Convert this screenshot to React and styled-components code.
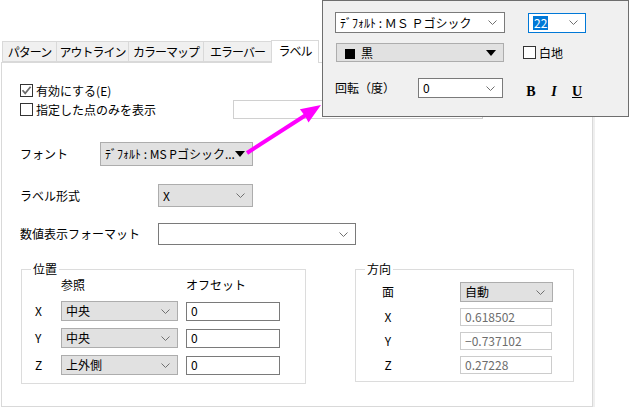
import React from 'react'
import styled, { createGlobalStyle } from 'styled-components'

const GlobalStyle = createGlobalStyle`
  html, body {
    margin: 0;
    padding: 0;
    background: #fff;
  }
  body {
    font-family: "Noto Sans CJK JP", "Liberation Sans", sans-serif;
    font-size: 12px;
    color: #000;
  }
  * { box-sizing: border-box; }
`

const Page = styled.div`
  position: relative;
  width: 630px;
  height: 409px;
  overflow: hidden;
  background: #fff;
`

const TabStrip = styled.div`
  display: flex;
  align-items: flex-end;
  height: 62px;
  padding-left: 2px;
  position: relative;
  z-index: 1;
`

const Tab = styled.div`
  width: ${p => p.w}px;
  height: ${p => (p.active ? 23 : 21)}px;
  margin-right: -1px;
  margin-bottom: ${p => (p.active ? -1 : 0)}px;
  border: 1px solid #d9d9d9;
  border-bottom: ${p => (p.active ? 'none' : '1px solid #d9d9d9')};
  background: ${p => (p.active ? '#fff' : '#f0f0f0')};
  display: flex;
  align-items: center;
  justify-content: center;
  line-height: 14px;
  white-space: nowrap;
  letter-spacing: -1px;
  position: relative;
  z-index: ${p => (p.active ? 2 : 1)};
  padding-bottom: ${p => (p.active ? 2 : 0)}px;
`

const Panel = styled.div`
  margin-left: 1px;
  width: 592px;
  height: 345px;
  border: 1px solid #d9d9d9;
  box-shadow: 2px 0 0 #efefef;
  padding: 18px 0 0 18px;
  background: #fff;
`

const Row = styled.div`
  display: flex;
  align-items: center;
  height: ${p => p.h || 19}px;
  margin-top: ${p => p.mt || 0}px;
  line-height: 14px;
`

const Label = styled.span`
  width: ${p => p.w}px;
  flex: none;
  white-space: nowrap;
`

const CheckLabel = styled.label`
  display: flex;
  align-items: center;
  gap: 3px;
  width: ${p => (p.w ? `${p.w}px` : 'auto')};
  flex: none;
  white-space: nowrap;
`

const Box = styled.span`
  width: 13px;
  height: 13px;
  border: 1px solid #333;
  background: #fff;
  display: inline-flex;
  align-items: center;
  justify-content: center;
  flex: none;
`

const TextBox = styled.div`
  width: ${p => p.w}px;
  height: ${p => p.h || 19}px;
  border: 1px solid ${p => p.line || '#7a7a7a'};
  background: #fff;
  color: ${p => p.ink || '#000'};
  padding-left: 4px;
  display: flex;
  align-items: center;
  flex: none;
  white-space: nowrap;
`

const Combo = styled.div`
  width: ${p => p.w}px;
  height: ${p => p.h || 20}px;
  border: 1px solid ${p => (p.flat ? '#adadad' : p.focus ? '#0078d7' : '#7a7a7a')};
  background: ${p => (p.flat ? '#e1e1e1' : '#fff')};
  display: flex;
  align-items: center;
  justify-content: space-between;
  padding: 0 7px 0 4px;
  flex: none;
  white-space: nowrap;
`

const Selected = styled.span`
  background: #0078d7;
  color: #fff;
  padding: 0 1px;
  line-height: 14px;
`

const Swatch = styled.span`
  display: inline-block;
  width: 10px;
  height: 10px;
  background: #000;
  margin: 0 6px 0 4px;
  vertical-align: -1px;
`

const GroupRow = styled.div`
  display: flex;
  margin-top: 17px;
  margin-left: 1px;
  gap: 49px;
`

const Group = styled.fieldset`
  margin: 0;
  padding: 0;
  min-width: 0;
  width: ${p => p.w}px;
  height: ${p => p.h}px;
  border: 1px solid #dcdcdc;
`

const Legend = styled.legend`
  margin-left: 9px;
  padding: 0 2px;
  line-height: 14px;
  font-size: 12px;
`

const PosGrid = styled.div`
  display: grid;
  grid-template-columns: 18px 117px 94px;
  grid-template-rows: 18px 20px 20px 20px;
  column-gap: 8px;
  row-gap: 7px;
  padding-left: 13px;
  align-items: center;
  line-height: 14px;
`

const DirGrid = styled.div`
  display: grid;
  grid-template-columns: 24px 92px;
  grid-template-rows: 20px 18px 18px 18px;
  column-gap: 60px;
  row-gap: 6px;
  padding: 6px 0 0 20px;
  align-items: center;
  line-height: 14px;
`

const Axis = styled.span`
  text-align: ${p => (p.left ? 'left' : 'center')};
`

const Popup = styled.div`
  position: absolute;
  left: 322px;
  top: 0;
  width: 307px;
  height: 117px;
  background: #f0f0f0;
  border: 1px solid #6e6e6e;
  padding: 11px 0 0 12px;
  z-index: 3;
`

const StyleBtns = styled.div`
  display: flex;
  gap: 13px;
  margin: 8px 0 0 23px;
  font-family: "Liberation Serif", serif;
  font-weight: bold;
  font-size: 14px;
`

const StyleBtn = styled.span`
  font-style: ${p => (p.italic ? 'italic' : 'normal')};
  text-decoration: ${p => (p.under ? 'underline' : 'none')};
  width: 10px;
  text-align: center;
`

const Arrow = styled.svg`
  position: absolute;
  left: 0;
  top: 0;
  z-index: 4;
  pointer-events: none;
`

const Chevron = () => (
  <svg width="9" height="5" viewBox="0 0 9 5">
    <path d="M0.5 0.5 L4.5 4.5 L8.5 0.5" fill="none" stroke="#707070" strokeWidth="1" />
  </svg>
)

const Down = () => (
  <svg width="10" height="6" viewBox="0 0 10 6">
    <path d="M0 0 H10 L5 6 Z" fill="#000" />
  </svg>
)

const Check = ({ on }) => (
  <Box>
    {on && (
      <svg width="11" height="11" viewBox="0 0 11 11">
        <path d="M1.5 5.3 L4.2 8.4 L9.6 1.8" fill="none" stroke="#6a6a6a" strokeWidth="1.7" />
      </svg>
    )}
  </Box>
)

const tabs = [
  ['パターン', 55],
  ['アウトライン', 73],
  ['カラーマップ', 76],
  ['エラーバー', 69],
  ['ラベル', 48],
]

const positions = [
  ['X', '中央'],
  ['Y', '中央'],
  ['Z', '上外側'],
]

const direction = [
  ['X', '0.618502'],
  ['Y', '−0.737102'],
  ['Z', '0.27228'],
]

export default function App() {
  return (
    <Page>
      <GlobalStyle />
      <TabStrip>
        {tabs.map(([t, w], i) => (
          <Tab key={t} w={w} active={i === 4}>{t}</Tab>
        ))}
      </TabStrip>
      <Panel>
        <Row>
          <CheckLabel><Check on />有効にする(E)</CheckLabel>
        </Row>
        <Row>
          <CheckLabel w={213}><Check />指定した点のみを表示</CheckLabel>
          <TextBox w={250} line="#d0d0d0" />
        </Row>
        <Row mt={23} h={24}>
          <Label w={80}>フォント</Label>
          <Combo w={153} h={24} flat>
            <span>ﾃﾞﾌｫﾙﾄ : MS Pゴシック...</span>
            <Down />
          </Combo>
        </Row>
        <Row mt={18} h={23}>
          <Label w={138}>ラベル形式</Label>
          <Combo w={95} h={23} flat>
            <span>X</span>
            <Chevron />
          </Combo>
        </Row>
        <Row mt={16} h={22}>
          <Label w={138}>数値表示フォーマット</Label>
          <Combo w={198} h={22}>
            <span />
            <Chevron />
          </Combo>
        </Row>
        <GroupRow>
          <Group w={285} h={122}>
            <Legend>位置</Legend>
            <PosGrid>
              <span />
              <span>参照</span>
              <span>オフセット</span>
              {positions.map(([a, v]) => (
                <React.Fragment key={a}>
                  <Axis left>{a}</Axis>
                  <Combo w={117} h={20} flat>
                    <span>{v}</span>
                    <Chevron />
                  </Combo>
                  <TextBox w={94} h={19}>0</TextBox>
                </React.Fragment>
              ))}
            </PosGrid>
          </Group>
          <Group w={219} h={120}>
            <Legend>方向</Legend>
            <DirGrid>
              <Axis>面</Axis>
              <Combo w={93} h={20} flat>
                <span>自動</span>
                <Chevron />
              </Combo>
              {direction.map(([a, v]) => (
                <React.Fragment key={a}>
                  <Axis>{a}</Axis>
                  <TextBox w={92} h={18} line="#cccccc" ink="#6d6d6d">{v}</TextBox>
                </React.Fragment>
              ))}
            </DirGrid>
          </Group>
        </GroupRow>
      </Panel>

      <Popup>
        <Row h={21}>
          <Combo w={170} h={21}>
            <span>ﾃﾞﾌｫﾙﾄ : ＭＳ Ｐゴシック</span>
            <Chevron />
          </Combo>
          <Label w={23} />
          <Combo w={58} h={20} focus>
            <Selected>22</Selected>
            <Chevron />
          </Combo>
        </Row>
        <Row mt={10} h={19}>
          <Label w={1} />
          <Combo w={168} h={19} flat>
            <span><Swatch />黒</span>
            <Down />
          </Combo>
          <Label w={19} />
          <CheckLabel><Check />白地</CheckLabel>
        </Row>
        <Row mt={16} h={20}>
          <Label w={83}>回転（度）</Label>
          <Combo w={85} h={20}>
            <span>0</span>
            <Chevron />
          </Combo>
          <StyleBtns>
            <StyleBtn>B</StyleBtn>
            <StyleBtn italic>I</StyleBtn>
            <StyleBtn under>U</StyleBtn>
          </StyleBtns>
        </Row>
      </Popup>

      <Arrow width="630" height="409" viewBox="0 0 630 409">
        <line x1="247" y1="153" x2="306" y2="115" stroke="#ff00ff" strokeWidth="4" />
        <path d="M321 105 L308.5 122.6 L305 116 L299.9 109.2 Z" fill="#ff00ff" />
      </Arrow>
    </Page>
  )
}
